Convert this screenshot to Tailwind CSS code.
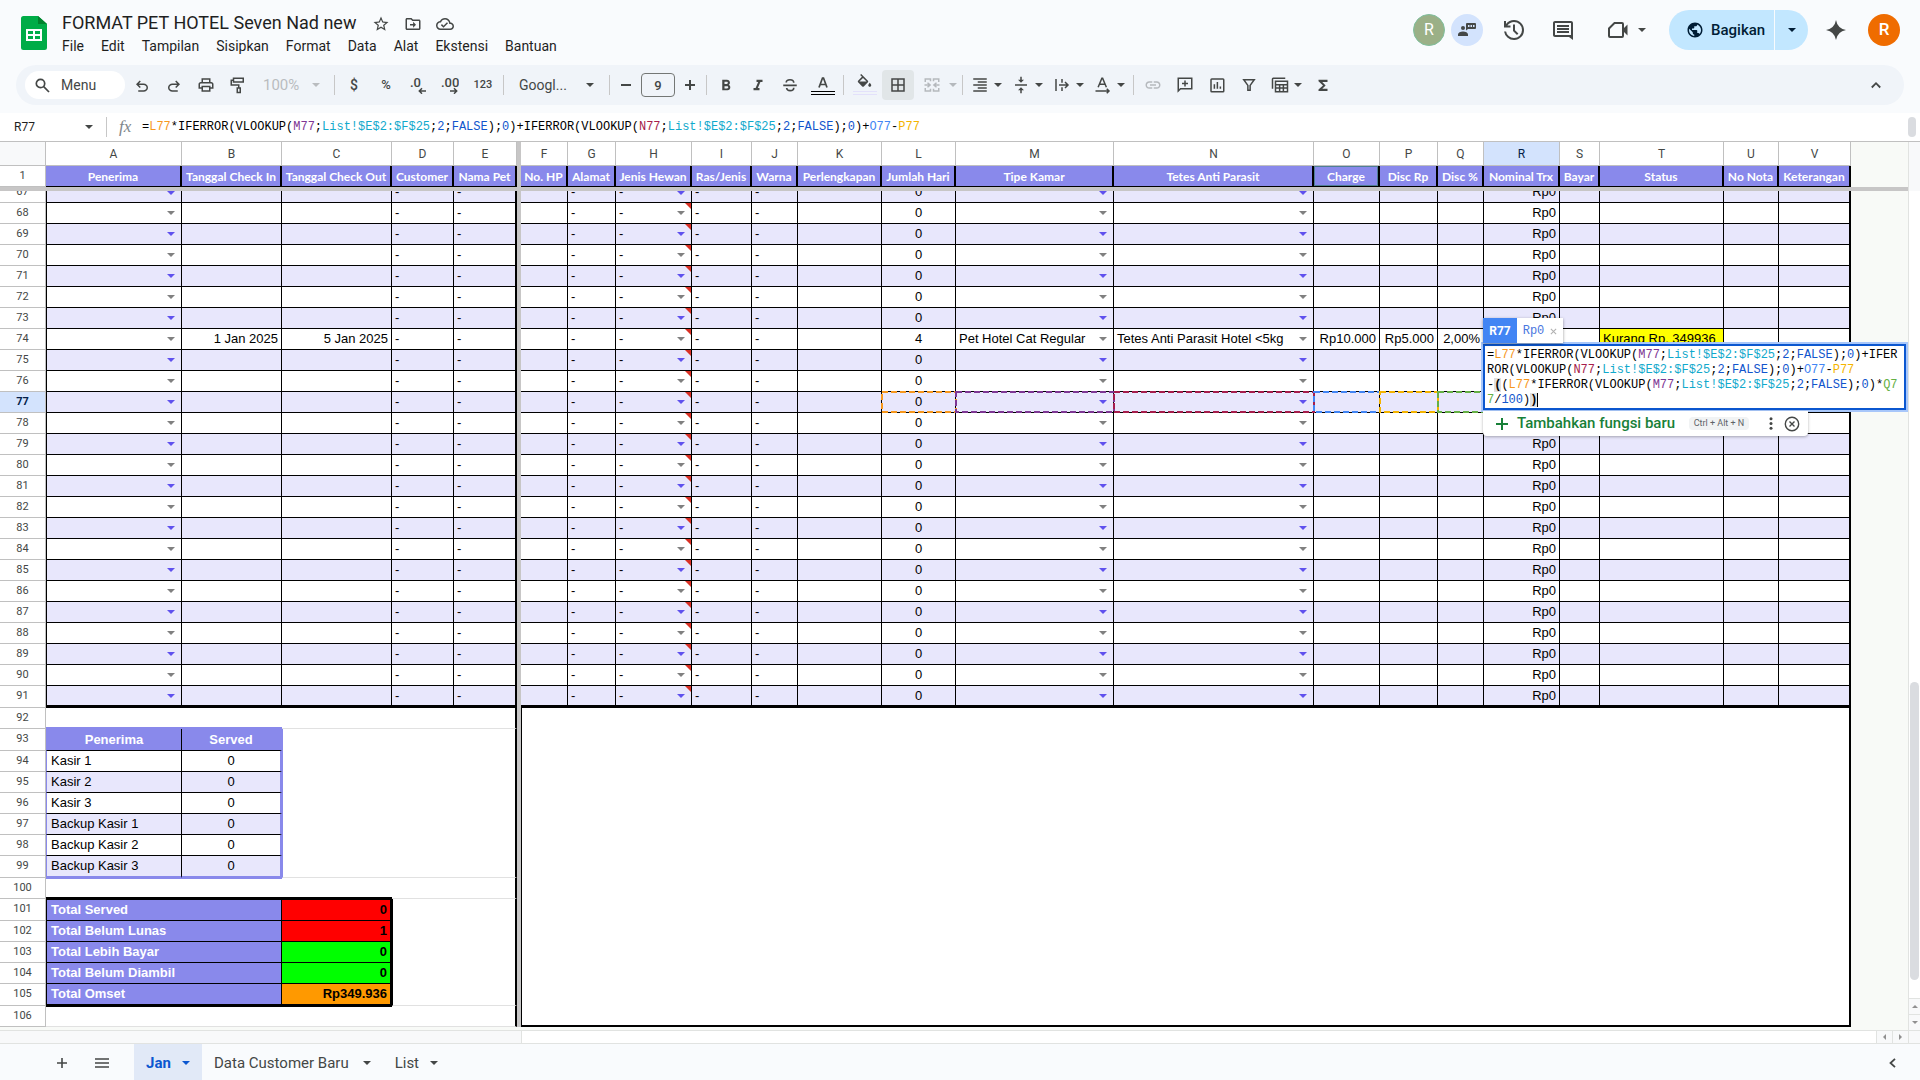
<!DOCTYPE html>
<html lang="id">
<head>
<meta charset="utf-8">
<title>FORMAT PET HOTEL Seven Nad new</title>
<script src="https://cdn.jsdelivr.net/npm/@tailwindcss/browser@4"></script>
</head>
<body class="flex h-screen flex-col overflow-hidden bg-[#f9fbfd] font-['Roboto',sans-serif] text-[#1f1f1f]">

<header class="flex h-[65px] shrink-0 items-start pr-5 pl-5">
  <svg class="mt-4 h-[34px] w-7 shrink-0" viewBox="0 0 28 34"><path fill="#00ac47" d="M3 0h15l9 8v23.500a2.500 2.500 0 0 1-2.500 2.500h-21A2.500 2.500 0 0 1 1 31.500V2.500A2.500 2.500 0 0 1 3.500 0z"/><path fill="#00832d" d="M18 0l9 8h-9z"/><path fill="#fff" d="M6 13h16v12H6zm2 2v3h5v-3zm7 0v3h5v-3zm-7 5v3h5v-3zm7 0v3h5v-3z"/></svg>
  <div class="ml-[14px] min-w-0 pt-[10px]">
    <div class="flex h-[26px] items-center">
      <input aria-label="Nama file" value="FORMAT PET HOTEL Seven Nad new" class="w-[310px] bg-transparent text-[18px] leading-6 outline-none">
      <div class="flex items-center gap-[14px] pt-px text-[#444746]">
        <button aria-label="Bintangi"><svg class="size-[18px]" viewBox="0 0 24 24" fill="currentColor"><path d="M22 9.240l-7.190-.62L12 2 9.190 8.630 2 9.240l5.460 4.730L5.820 21 12 17.270 18.180 21l-1.630-7.030L22 9.240zM12 15.400l-3.760 2.270 1-4.280-3.320-2.880 4.380-.38L12 6.100l1.710 4.040 4.380.38-3.320 2.880 1 4.280L12 15.400z"/></svg></button>
        <button aria-label="Pindahkan"><svg class="size-[18px]" viewBox="0 0 24 24" fill="currentColor"><path d="M20 6h-8l-2-2H4c-1.100 0-2 .9-2 2v12c0 1.100.9 2 2 2h16c1.100 0 2-.9 2-2V8c0-1.100-.9-2-2-2zm0 12H4V6h5.170l2 2H20v10zm-7.840-1L16 13l-3.840-4v3H8v2h4.160z"/></svg></button>
        <button aria-label="Status dokumen"><svg class="size-[18px]" viewBox="0 0 24 24" fill="currentColor"><path d="M19.350 10.040C18.670 6.590 15.640 4 12 4 9.110 4 6.600 5.640 5.350 8.040 2.340 8.360 0 10.910 0 14c0 3.310 2.690 6 6 6h13c2.760 0 5-2.240 5-5 0-2.640-2.050-4.780-4.650-4.960zM19 18H6c-2.210 0-4-1.790-4-4 0-2.050 1.530-3.760 3.560-3.970l1.070-.11.5-.95C8.080 7.140 9.940 6 12 6c2.620 0 4.880 1.860 5.390 4.430l.3 1.500 1.530.11c1.560.1 2.780 1.410 2.780 2.960 0 1.650-1.350 3-3 3zm-9-3.820l-2.090-2.090L6.500 13.500 10 17l6.010-6.010-1.410-1.410z"/></svg></button>
      </div>
    </div>
    <nav class="flex h-5 items-center gap-[17px] text-[14px]">
      <button>File</button><button>Edit</button><button>Tampilan</button><button>Sisipkan</button><button>Format</button><button>Data</button><button>Alat</button><button>Ekstensi</button><button>Bantuan</button>
    </nav>
  </div>
  <div class="ml-auto flex h-[60px] shrink-0 items-center text-[#444746]">
    <span class="flex size-8 items-center justify-center rounded-full border border-[#7fbf9d] bg-[#9bb087] text-[16px] text-white">R</span>
    <button aria-label="Chat" class="ml-[6px] flex size-8 items-center justify-center rounded-full bg-[#d3e3fd]"><svg class="size-5" viewBox="0 0 20 20"><circle cx="6" cy="8" r="2" fill="currentColor"/><path fill="currentColor" d="M1 16v-1.500c0-2 2.500-3 5-3s5 1 5 3V16zM10 3h8a1 1 0 0 1 1 1v4a1 1 0 0 1-1 1h-7l-2 1.500V4a1 1 0 0 1 1-1z"/><path fill="#d3e3fd" d="M11 5h1.500v2H11zm2.500 0H15v2h-1.500zM16 5h1.500v2H16z"/></svg></button>
    <button aria-label="Histori versi" class="ml-[19px]"><svg class="size-6" viewBox="0 0 24 24" fill="currentColor"><path d="M12 22q-3.800 0-6.600-2.500T2.050 13.500H4.100q.4 2.800 2.600 4.600T12 20q3.300 0 5.650-2.350T20 12t-2.350-5.650T12 4Q10 4 8.300 4.900T5.400 7.500H8.500v2H2v-6.500h2v3q1.400-1.900 3.500-2.950T12 2q2.100 0 3.900.8t3.200 2.150 2.150 3.200T22 12t-.75 3.900-2.150 3.200-3.200 2.150T12 22m3-5l-4-4V6.500h2v5.650l3.400 3.400z"/></svg></button>
    <button aria-label="Komentar" class="ml-[25px]"><svg class="size-6" viewBox="0 0 24 24" fill="currentColor"><path d="M21.990 5c0-1.100-.89-2-1.990-2H4c-1.100 0-2 .9-2 2v12c0 1.100.9 2 2 2h14l4 3-.01-17zM20 5v12H4V5h16zM6 13h12v2H6zm0-3h12v2H6zm0-3h12v2H6z"/></svg></button>
    <button aria-label="Rapat" class="ml-[31px] flex items-center"><svg class="size-6" viewBox="0 0 24 24" fill="none" stroke="currentColor" stroke-width="2"><path d="M8.500 5H16a1 1 0 0 1 1 1v12a1 1 0 0 1-1 1H4a1 1 0 0 1-1-1v-7.500z"/><path fill="currentColor" stroke="none" d="M17 11l4.500-4.500v11L17 13z"/></svg><svg class="ml-2 h-1 w-2" viewBox="0 0 8 4"><path fill="currentColor" d="M0 0h8L4 4z"/></svg></button>
    <div class="ml-[23px] flex h-10 gap-px text-[#001d35]">
      <button class="flex w-[105px] items-center gap-[7px] rounded-l-full bg-[#c2e7ff] pl-[17px] text-[15px] font-medium"><svg class="size-[18px]" viewBox="0 0 24 24" fill="currentColor"><path d="M12 2C6.480 2 2 6.480 2 12s4.480 10 10 10 10-4.480 10-10S17.520 2 12 2zm-1 17.930c-3.950-.49-7-3.850-7-7.930 0-.62.08-1.210.21-1.790L9 15v1c0 1.100.9 2 2 2v1.930zm6.900-2.540c-.26-.81-1-1.390-1.900-1.390h-1v-3c0-.55-.45-1-1-1H8v-2h2c.55 0 1-.45 1-1V7h2c1.100 0 2-.9 2-2v-.41c2.930 1.190 5 4.060 5 7.410 0 2.080-.8 3.970-2.100 5.390z"/></svg>Bagikan</button>
      <button aria-label="Opsi berbagi" class="flex w-[33px] items-center justify-center rounded-r-full bg-[#c2e7ff]"><svg class="h-1 w-2" viewBox="0 0 8 4"><path fill="currentColor" d="M0 0h8L4 4z"/></svg></button>
    </div>
    <button aria-label="Gemini" class="ml-[18px]"><svg class="size-5" viewBox="0 0 20 20"><path fill="currentColor" d="M10 0q1.500 8.500 10 10-8.500 1.500-10 10Q8.500 11.500 0 10 8.500 8.500 10 0z"/></svg></button>
    <button aria-label="Akun Google" class="ml-[22px] flex size-8 items-center justify-center rounded-full bg-[#ef6c00] text-[17px] font-medium text-white">R</button>
  </div>
</header>

<div role="toolbar" aria-label="Utama" class="mx-4 mb-2 flex h-10 shrink-0 items-center rounded-full bg-[#f0f4f9] text-[13px] font-medium text-[#444746]">
  <label class="ml-[9px] flex h-7 w-[100px] shrink-0 items-center gap-[11px] rounded-full bg-white pl-[10px]"><svg class="size-[15px] shrink-0" viewBox="0 0 15 15" fill="none" stroke="currentColor" stroke-width="1.700"><circle cx="5.500" cy="5.500" r="4.200"/><path d="M8.700 8.700l5.300 5.300"/></svg><input aria-label="Menu" placeholder="Menu" class="w-12 bg-transparent text-[14px] font-normal outline-none placeholder:text-[#444746]"></label>
  <button aria-label="Urungkan" class="ml-px flex w-8 justify-center"><svg class="size-[18px]" viewBox="0 0 24 24" fill="currentColor"><path d="M7 21v-2h7.100q1.575 0 2.738-1T18 15.500t-1.162-2.500T14.100 12H7.800l2.600 2.600L9 16 4 11l5-5 1.400 1.400L7.800 10h6.300q2.425 0 4.163 1.575T20 15.500t-1.737 3.925T14.100 21z"/></svg></button>
  <button aria-label="Ulangi" class="flex w-8 justify-center"><svg class="size-[18px]" viewBox="0 0 24 24" fill="currentColor"><path transform="matrix(-1 0 0 1 24 0)" d="M7 21v-2h7.100q1.575 0 2.738-1T18 15.500t-1.162-2.500T14.100 12H7.800l2.600 2.600L9 16 4 11l5-5 1.400 1.400L7.800 10h6.300q2.425 0 4.163 1.575T20 15.500t-1.737 3.925T14.100 21z"/></svg></button>
  <button aria-label="Cetak" class="flex w-8 justify-center"><svg class="size-[18px]" viewBox="0 0 24 24" fill="currentColor"><path d="M19 8h-1V3H6v5H5c-1.660 0-3 1.340-3 3v6h4v4h12v-4h4v-6c0-1.660-1.340-3-3-3zM8 5h8v3H8V5zm8 12v2H8v-4h8v2zm2-2v-2H6v2H4v-4c0-.55.45-1 1-1h14c.55 0 1 .45 1 1v4h-2z"/></svg></button>
  <button aria-label="Format cat" class="flex w-8 justify-center"><svg class="size-[18px]" viewBox="0 0 24 24" fill="none" stroke="currentColor" stroke-width="2"><path d="M6 3h13v5H6zM6 5.500H3V12h10v4M11 16h4v6h-4z"/></svg></button>
  <button class="flex w-[77px] items-center gap-[13px] pl-[9px] text-[15px] font-normal text-[#b9bcbf]">100%<svg class="h-1 w-2" viewBox="0 0 8 4"><path fill="currentColor" d="M0 0h8L4 4z"/></svg></button>
  <span class="mx-[3px] h-5 w-px bg-[#c7c7c7]"></span>
  <button class="w-8 text-[14px]">$</button>
  <button class="w-8">%</button>
  <button aria-label="Kurangi desimal" class="flex w-8 justify-center"><svg class="h-[18px] w-4" viewBox="0 0 16 18"><text x="0" y="11" font-size="13" fill="currentColor">.0</text><path fill="none" stroke="currentColor" stroke-width="1.500" d="M16 15H9.500M12 12.300L9.300 15l2.700 2.700"/></svg></button>
  <button aria-label="Tambah desimal" class="flex w-8 justify-center"><svg class="h-[18px] w-[18px]" viewBox="0 0 18 18"><text x="0" y="11" font-size="13" fill="currentColor">.00</text><path fill="none" stroke="currentColor" stroke-width="1.500" d="M9 15h6.500M13 12.300l2.700 2.700-2.700 2.700"/></svg></button>
  <button class="w-[34px] text-[11px]">123</button>
  <span class="mx-[3px] h-5 w-px bg-[#c7c7c7]"></span>
  <button class="flex w-[99px] items-center justify-between pr-3 pl-3 text-[14px] font-normal">Googl...<svg class="h-1 w-2" viewBox="0 0 8 4"><path fill="currentColor" d="M0 0h8L4 4z"/></svg></button>
  <span class="mx-[3px] h-5 w-px bg-[#c7c7c7]"></span>
  <button aria-label="Perkecil font" class="flex w-[26px] justify-center"><svg class="size-3" viewBox="0 0 12 12"><path stroke="currentColor" stroke-width="2" d="M1 6h10"/></svg></button>
  <input aria-label="Ukuran font" value="9" class="mx-[2px] h-6 w-[34px] rounded border border-[#747775] bg-transparent text-center text-[13px] outline-none">
  <button aria-label="Perbesar font" class="flex w-[26px] justify-center"><svg class="size-3" viewBox="0 0 12 12"><path stroke="currentColor" stroke-width="2" d="M1 6h10M6 1v10"/></svg></button>
  <span class="mx-[3px] h-5 w-px bg-[#c7c7c7]"></span>
  <button aria-label="Tebal" class="flex w-8 justify-center"><svg class="size-[18px]" viewBox="0 0 24 24" fill="currentColor"><path d="M15.600 11.790c.97-.67 1.650-1.770 1.650-2.790 0-2.260-1.750-4-4-4H7v14h7.040c2.090 0 3.710-1.700 3.710-3.790 0-1.520-.86-2.820-2.150-3.420zM10 7.500h3c.83 0 1.500.67 1.500 1.500s-.67 1.500-1.500 1.500h-3v-3zm3.500 9H10v-3h3.500c.83 0 1.500.67 1.500 1.500s-.67 1.500-1.500 1.500z"/></svg></button>
  <button aria-label="Miring" class="flex w-8 justify-center"><svg class="size-[18px]" viewBox="0 0 24 24" fill="currentColor"><path d="M10 5v3h2.210l-3.420 8H6v3h8v-3h-2.210l3.420-8H18V5z"/></svg></button>
  <button aria-label="Coret" class="flex w-8 justify-center"><svg class="size-[18px]" viewBox="0 0 24 24" fill="none" stroke="currentColor" stroke-width="2.200"><path d="M3 12.500h18M17 9c0-2.500-2-4-5-4s-5 1.500-5 3.700M7.500 16c.3 2.300 2 3.500 4.700 3.500 3 0 4.800-1.300 4.800-4"/></svg></button>
  <button aria-label="Warna teks" class="flex w-[34px] justify-center"><svg class="h-6 w-6" viewBox="0 0 24 24"><path fill="none" stroke="currentColor" stroke-width="1.700" d="M8 14.500l3.500-9.500h1L16 14.500M9.300 11.500h5.400"/><path fill="#000" d="M0 18h24v1H0zM0 21h24v1H0z"/></svg></button>
  <span class="mx-[3px] h-5 w-px bg-[#c7c7c7]"></span>
  <button aria-label="Warna isian" class="flex w-[35px] justify-center"><svg class="h-[26px] w-6" viewBox="0 0 24 26"><path fill="currentColor" transform="translate(2.500 2) scale(.75)" d="M16.560 8.940L7.620 0 6.210 1.410l2.380 2.380-5.150 5.150c-.59.59-.59 1.540 0 2.120l5.500 5.500c.29.29.68.44 1.060.44s.77-.15 1.060-.44l5.500-5.500c.59-.58.59-1.530 0-2.120zM5.210 10L10 5.210 14.790 10H5.210zM19 11.500s-2 2.170-2 3.500c0 1.100.9 2 2 2s2-.9 2-2c0-1.330-2-3.500-2-3.500z"/><path fill="#e3e1fb" d="M0 19h24v1H0zM0 22h24v1H0z"/></svg></button>
  <button aria-label="Batas" class="flex h-[30px] w-8 items-center justify-center rounded bg-[#e1e6e8]"><svg class="size-[18px]" viewBox="0 0 24 24" fill="currentColor"><path d="M3 3v18h18V3H3zm8 16H5v-6h6v6zm0-8H5V5h6v6zm8 8h-6v-6h6v6zm0-8h-6V5h6v6z"/></svg></button>
  <button aria-label="Gabungkan sel" class="flex w-[45px] items-center justify-end gap-[8px] pr-[2px] text-[#b5b9bd]"><svg class="size-[18px]" viewBox="0 0 24 24" fill="none" stroke="currentColor" stroke-width="2"><path d="M3 8V4h7v3M3 16v4h7v-3M21 8V4h-7v3M21 16v4h-7v-3M2 12h7M6 9l3.500 3L6 15M22 12h-7M18 9l-3.500 3 3.500 3"/></svg><svg class="h-1 w-2" viewBox="0 0 8 4"><path fill="currentColor" d="M0 0h8L4 4z"/></svg></button>
  <span class="mx-[3px] h-5 w-px bg-[#c7c7c7]"></span>
  <button aria-label="Perataan horizontal" class="flex w-[41px] items-center justify-center gap-[5px]"><svg class="size-[18px]" viewBox="0 0 24 24" fill="none" stroke="currentColor" stroke-width="2"><path d="M3 4h18M9 8h12M3 12h18M9 16h12M3 20h18"/></svg><svg class="h-1 w-2" viewBox="0 0 8 4"><path fill="currentColor" d="M0 0h8L4 4z"/></svg></button>
  <button aria-label="Perataan vertikal" class="flex w-[41px] items-center justify-center gap-[5px]"><svg class="size-[18px]" viewBox="0 0 24 24"><path fill="currentColor" d="M4 11h16v2H4zM11 1h2v4h3l-4 4-4-4h3zM11 23h2v-4h3l-4-4-4 4h3z"/></svg><svg class="h-1 w-2" viewBox="0 0 8 4"><path fill="currentColor" d="M0 0h8L4 4z"/></svg></button>
  <button aria-label="Pengepasan teks" class="flex w-[41px] items-center justify-center gap-[5px]"><svg class="size-[18px]" viewBox="0 0 24 24" fill="none" stroke="currentColor" stroke-width="2"><path d="M4 4v16M12 4v5M12 15v5M8 12h12M16 8l4 4-4 4"/></svg><svg class="h-1 w-2" viewBox="0 0 8 4"><path fill="currentColor" d="M0 0h8L4 4z"/></svg></button>
  <button aria-label="Rotasi teks" class="flex w-[41px] items-center justify-center gap-[5px]"><svg class="size-[18px]" viewBox="0 0 24 24" fill="none" stroke="currentColor" stroke-width="2"><path d="M5.500 15L10.500 3h1l5 12M7.500 11h7M2 20h18M17 17l3 3-3 3"/></svg><svg class="h-1 w-2" viewBox="0 0 8 4"><path fill="currentColor" d="M0 0h8L4 4z"/></svg></button>
  <span class="mx-[3px] h-5 w-px bg-[#c7c7c7]"></span>
  <button aria-label="Sisipkan link" class="flex w-8 justify-center text-[#b5b9bd]"><svg class="size-[18px]" viewBox="0 0 24 24" fill="currentColor"><path d="M3.900 12c0-1.710 1.390-3.100 3.100-3.100h4V7H7c-2.760 0-5 2.240-5 5s2.240 5 5 5h4v-1.900H7c-1.710 0-3.100-1.390-3.100-3.100zM8 13h8v-2H8v2zm9-6h-4v1.900h4c1.710 0 3.100 1.390 3.100 3.100s-1.390 3.100-3.100 3.100h-4V17h4c2.760 0 5-2.240 5-5s-2.240-5-5-5z"/></svg></button>
  <button aria-label="Sisipkan komentar" class="flex w-8 justify-center"><svg class="size-[18px]" viewBox="0 0 24 24" fill="none" stroke="currentColor" stroke-width="2"><path d="M3 20V3h18v14H6zM12 6v8M8 10h8"/></svg></button>
  <button aria-label="Sisipkan diagram" class="flex w-8 justify-center"><svg class="size-[18px]" viewBox="0 0 24 24" fill="none" stroke="currentColor" stroke-width="2"><rect x="4" y="4" width="17" height="17" rx="1"/><path d="M8.500 11v6M12.500 8v9M16.500 14v3"/></svg></button>
  <button aria-label="Buat filter" class="flex w-8 justify-center"><svg class="size-[18px]" viewBox="0 0 24 24" fill="none" stroke="currentColor" stroke-width="2"><path d="M5 5h14l-5.500 7.500V19h-3v-6.500z"/></svg></button>
  <button aria-label="Tabel" class="flex w-[42px] items-center justify-center gap-[5px]"><svg class="size-[18px]" viewBox="0 0 24 24" fill="none" stroke="currentColor" stroke-width="2"><path d="M2 17V4a1 1 0 0 1 1-1h16M6 7h16v14H6zM6 11.500h16M6 16h16M11.500 11v10M16.500 11v10"/></svg><svg class="h-1 w-2" viewBox="0 0 8 4"><path fill="currentColor" d="M0 0h8L4 4z"/></svg></button>
  <button aria-label="Fungsi" class="flex w-8 justify-center"><svg class="size-[18px]" viewBox="0 0 24 24" fill="currentColor"><path d="M18 5H6v2l6 5.500L6 18v2h12v-3h-7l4.500-4.500L11 8h7z"/></svg></button>
  <button aria-label="Sembunyikan menu" class="mr-[23px] ml-auto"><svg class="h-[10px] w-[10px]" viewBox="0 0 10 10" fill="none" stroke="currentColor" stroke-width="1.800"><path d="M.8 7.500L5 3.200l4.200 4.300"/></svg></button>
</div>

<div class="flex h-[29px] shrink-0 items-center border-b border-[#c0c0c0] bg-white">
  <input aria-label="Kotak nama" value="R77" class="ml-[14px] w-[71px] text-[12px] outline-none">
  <svg class="h-1 w-2" viewBox="0 0 8 4"><path fill="#444746" d="M0 0h8L4 4z"/></svg>
  <span class="ml-[13px] h-5 w-px bg-[#c7c7c7]"></span>
  <span class="ml-3 w-[18px] font-['Liberation_Serif',serif] text-[17px] text-[#80868b] italic">fx</span>
  <div id="formula-bar" role="textbox" aria-label="Kolom formula" class="ml-[5px] flex-1 font-['Liberation_Mono',monospace] text-[12px] whitespace-pre text-black"></div>
  <span class="mr-1 h-5 w-2 rounded-full bg-[#dadce0]"></span>
</div>

<main class="flex min-h-0 flex-1">
  <div class="relative min-w-0 flex-1 overflow-hidden bg-[#f8faf7]">
    <table id="sheet" class="w-full table-fixed border-separate border-spacing-0 font-['Liberation_Sans',sans-serif] text-[13px] text-black"></table>
  </div>
  <div class="flex w-3 shrink-0 flex-col border-l border-[#e1e3e1] bg-white">
    <span class="h-[49px] shrink-0 bg-[#f8f9fa]"></span>
    <span class="flex-[491]"></span>
    <span class="mr-px ml-px flex-[298] rounded-full bg-[#dadce0]"></span>
    <span class="flex-[18]"></span>
    <button aria-label="Gulir ke atas" class="flex h-4 shrink-0 items-center justify-center border-t border-[#e1e3e1] bg-[#f8f9fa]"><svg class="h-[3px] w-[6px]" viewBox="0 0 6 3"><path fill="#909090" d="M0 3h6L3 0z"/></svg></button>
    <button aria-label="Gulir ke bawah" class="flex h-4 shrink-0 items-center justify-center border-t border-[#e1e3e1] bg-[#f8f9fa]"><svg class="h-[3px] w-[6px]" viewBox="0 0 6 3"><path fill="#909090" d="M0 0h6L3 3z"/></svg></button>
  </div>
</main>

<div class="flex h-[14px] shrink-0 border-y border-[#e1e3e1] bg-white">
  <span class="w-[522px] border-r border-[#e1e3e1] bg-[#f8f9fa]"></span>
  <span class="flex-1"></span>
  <button aria-label="Gulir ke kiri" class="flex w-4 items-center justify-center border-l border-[#e1e3e1] bg-[#f8f9fa]"><svg class="h-[6px] w-[3px]" viewBox="0 0 3 6"><path fill="#909090" d="M3 0v6L0 3z"/></svg></button>
  <button aria-label="Gulir ke kanan" class="flex w-4 items-center justify-center border-l border-[#e1e3e1] bg-[#f8f9fa]"><svg class="h-[6px] w-[3px]" viewBox="0 0 3 6"><path fill="#909090" d="M0 0v6l3-3z"/></svg></button>
  <span class="w-3 border-l border-[#e1e3e1] bg-[#f8f9fa]"></span>
</div>

<footer class="flex h-9 shrink-0 items-center text-[15px] text-[#444746]">
  <button aria-label="Tambah sheet" class="ml-[57px] pt-[2px]"><svg class="size-[10px]" viewBox="0 0 10 10"><path stroke="currentColor" stroke-width="1.600" d="M0 5h10M5 0v10"/></svg></button>
  <button aria-label="Semua sheet" class="ml-7 pt-[2px]"><svg class="h-[10px] w-[14px]" viewBox="0 0 14 10"><path stroke="currentColor" stroke-width="1.600" d="M0 1h14M0 5h14M0 9h14"/></svg></button>
  <button class="ml-[25px] flex h-full w-[68px] items-center gap-[11px] bg-[#e1e9f7] pt-[2px] pl-3 font-bold text-[#0b57d0]">Jan<svg class="h-1 w-2" viewBox="0 0 8 4"><path fill="currentColor" d="M0 0h8L4 4z"/></svg></button>
  <button class="flex h-full items-center gap-[14px] px-3 pt-[2px]">Data Customer Baru<svg class="h-1 w-2" viewBox="0 0 8 4"><path fill="currentColor" d="M0 0h8L4 4z"/></svg></button>
  <button class="flex h-full items-center gap-[11px] px-3 pt-[2px]">List<svg class="h-1 w-2" viewBox="0 0 8 4"><path fill="currentColor" d="M0 0h8L4 4z"/></svg></button>
  <button aria-label="Tampilkan panel samping" class="mr-6 ml-auto pt-[2px]"><svg class="h-[10px] w-[7px]" viewBox="0 0 7 10" fill="none" stroke="currentColor" stroke-width="1.800"><path d="M6 .8L1.500 5 6 9.200"/></svg></button>
</footer>

<script>
// Formula text, coloured by reference
const C = { L: 'text-[#f7981d]', M: 'text-[#7e3794]', N: 'text-[#a61d4c]', F: 'text-[#11a9cc]', O: 'text-[#4285f4]', P: 'text-[#f4b400]', Q: 'text-[#65b045]', n: 'text-[#1155cc]' };
const s = (k, t) => `<span class="${C[k]}">${t}</span>`;
const list = s('F', 'List!$E$2:$F$25'), tail = `;${s('n', '2')};${s('n', 'FALSE')});${s('n', '0')})`;
const look = k => `(VLOOKUP(${s(k, k + '77')};${list}${tail}`;
document.getElementById('formula-bar').innerHTML = `=${s('L', 'L77')}*IFERROR${look('M')}+IFERROR${look('N')}+${s('O', 'O77')}-${s('P', 'P77')}`;

const editor = `
<div class="absolute -top-[48px] -left-px z-20 text-left">
  <div role="textbox" aria-label="Editor sel R77" class="w-[423px] border-2 border-[#0b57d0] bg-white px-[2px] pt-[2px] font-['Liberation_Mono',monospace] text-[12px] leading-[15px] whitespace-pre text-black ring-2 ring-[#a8c7fa]"><div>=${s('L', 'L77')}*IFERROR${look('M')}+IFER</div><div>ROR${look('N')}+${s('O', 'O77')}-${s('P', 'P77')}</div><div>-<b class="bg-[#e0e0e0]">(</b>(${s('L', 'L77')}*IFERROR${look('M')}*${s('Q', 'Q7')}</div><div>${s('Q', '7')}/${s('n', '100')})<b class="border-r border-black bg-[#e0e0e0]">)</b></div></div>
  <div class="absolute -top-[26px] left-0 flex h-[25px] items-center bg-white font-['Liberation_Mono',monospace] text-[12px] shadow-[0_1px_3px_rgba(0,0,0,0.4)]">
    <span class="flex h-full w-[34px] items-center justify-center bg-[#4285f4] font-['Roboto',sans-serif] font-bold text-white">R77</span>
    <span class="flex w-[46px] items-center justify-center gap-[6px] text-[#4a77e0]">Rp0<button aria-label="Tutup pratinjau" class="pt-px text-[#b0b0b0]"><svg class="size-[7px]" viewBox="0 0 8 8"><path stroke="currentColor" stroke-width="1.200" d="M1 1l6 6M7 1L1 7"/></svg></button></span>
  </div>
  <div class="absolute top-[67px] left-0 flex h-[25px] w-[325px] items-center rounded-b bg-white pl-[13px] font-['Roboto',sans-serif] whitespace-nowrap shadow-[0_1px_3px_rgba(0,0,0,0.3)]">
    <button class="flex w-[185px] items-center gap-[9px] text-[15px] font-medium text-[#188038]"><svg class="size-3 shrink-0" viewBox="0 0 12 12"><path stroke="currentColor" stroke-width="2" d="M0 6h12M6 0v12"/></svg>Tambahkan fungsi baru</button>
    <kbd class="ml-[8px] flex h-[13px] w-[60px] items-center justify-center rounded-sm bg-[#f1f3f4] font-['Roboto',sans-serif] text-[9px] text-[#5f6368]">Ctrl + Alt + N</kbd>
    <button aria-label="Opsi lainnya" class="ml-[20px]"><svg class="h-[13px] w-1" viewBox="0 0 4 13" fill="#444746"><circle cx="2" cy="1.800" r="1.500"/><circle cx="2" cy="6.500" r="1.500"/><circle cx="2" cy="11.200" r="1.500"/></svg></button>
    <button aria-label="Tutup" class="ml-[11px]"><svg class="size-4" viewBox="0 0 16 16" fill="none" stroke="#444746" stroke-width="1.400"><circle cx="8" cy="8" r="6.700"/><path d="M5.500 5.500l5 5M10.500 5.500l-5 5"/></svg></button>
  </div>
</div>`;

// Columns: letter, width, heading
const cols = [['A',136,'Penerima'],['B',100,'Tanggal Check In'],['C',110,'Tanggal Check Out'],['D',62,'Customer'],['E',63,'Nama Pet'],['|',4,''],['F',47,'No. HP'],['G',48,'Alamat'],['H',76,'Jenis Hewan'],['I',60,'Ras/Jenis'],['J',46,'Warna'],['K',84,'Perlengkapan'],['L',74,'Jumlah Hari'],['M',158,'Tipe Kamar'],['N',200,'Tetes Anti Parasit'],['O',66,'Charge'],['P',58,'Disc Rp'],['Q',46,'Disc %'],['R',76,'Nominal Trx'],['S',40,'Bayar'],['T',124,'Status'],['U',55,'No Nota'],['V',72,'Keterangan']];
const bar = 'p-0 bg-[#c7c6c6]';
const rowHead = (n, h = 'h-5') => `<th scope="row" class="border-r border-b border-[#c0c0c0] p-0 font-['Roboto',sans-serif] text-[11px] ${n === 77 ? 'bg-[#d3e3fd] font-bold text-[#041e49]' : 'bg-white font-normal text-[#444746]'}"><div class="flex ${h} items-center justify-center">${n}</div></th>`;
const arrow = odd => `<svg class="absolute top-2 right-[6px] h-1 w-2" viewBox="0 0 8 4"><path fill="${odd ? '#5f51ee' : '#808080'}" d="M0 0h8L4 4z"/></svg>`;
const note = '<svg class="absolute top-0 right-0 size-[6px]" viewBox="0 0 6 6"><path fill="#d93025" d="M0 0h6v6z"/></svg>';
const special = { B: '1 Jan 2025', C: '5 Jan 2025', L: '4', M: 'Pet Hotel Cat Regular', N: 'Tetes Anti Parasit Hotel &lt;5kg', O: 'Rp10.000', P: 'Rp5.000', Q: '2,00%', T: 'Kurang Rp. 349936' };
const refs = { L: '#f7981d', M: '#7e3794', N: '#a61d4c', O: '#4285f4', P: '#f4b400', Q: '#65b045' };
// The open cell editor covers column R in these rows
const covered = r => r >= 75 && r <= 78;

let html = '<colgroup><col style="width:46px">' + cols.map(c => `<col style="width:${c[1]}px">`).join('') + '<col></colgroup><thead>';
html += '<tr><td class="h-6 border-r border-b border-[#c0c0c0] bg-[#f8f9fa] p-0"></td>' + cols.map(([l]) => l === '|' ? `<td class="${bar}"></td>` : `<th scope="col" class="h-6 border-r border-b border-[#c0c0c0] p-0 font-['Roboto',sans-serif] text-[12px] font-normal ${l === 'R' ? 'bg-[#d3e3fd] text-[#041e49]' : 'bg-white text-[#444746]'}">${l}</th>`).join('') + '<td></td></tr>';
html += '<tr>' + rowHead(1) + cols.map(([l,, t]) => l === '|' ? `<td class="${bar}"></td>` : `<th scope="col" class="relative border-r-2 border-b border-black bg-[#8989eb] p-0 font-['Lato',sans-serif] text-[12px] font-bold whitespace-nowrap text-white"><div class="flex h-5 items-center justify-center pt-[2px]">${t}</div>${l === 'O' ? '<span class="absolute inset-0 border border-[#4f7f95]"></span>' : ''}</th>`).join('') + '<td></td></tr>';
html += `<tr><td colspan="${cols.length + 2}" class="h-1 p-0 bg-[#c7c6c6]"></td></tr></thead><tbody>`;

for (let r = 67; r <= 91; r++) {
  const odd = r % 2 === 1, last = r === 91, h = r === 67 ? 'h-[11px]' : last ? 'h-[19px]' : 'h-5';
  html += '<tr>' + (r === 67 ? `<th scope="row" class="border-r border-b border-[#c0c0c0] bg-white p-0 font-['Roboto',sans-serif] text-[11px] font-normal text-[#444746]"><div class="flex h-[11px] items-end justify-center overflow-hidden leading-5">67</div></th>` : rowHead(r, last ? 'h-[21px]' : 'h-5'));
  for (const [l] of cols) {
    if (l === '|') { html += `<td class="${bar}"></td>`; continue; }
    let t = 'DEGHIJ'.includes(l) ? '-' : l === 'L' ? '0' : l === 'R' && !covered(r) ? 'Rp0' : '';
    if (r === 74 && special[l]) t = special[l];
    const align = l === 'L' ? 'justify-center' : 'BCOPQR'.includes(l) ? 'justify-end' : 'justify-start';
    let extra = 'AHMN'.includes(l) ? (r === 67 ? '<span class="absolute inset-0 overflow-hidden"><svg class="absolute top-0 right-[6px] h-1 w-2" viewBox="0 0 8 4"><path fill="#5f51ee" d="M0 0h8L4 4z"/></svg></span>' : arrow(odd)) : '';
    if (l === 'H' && r > 67) extra += note;
    if (r === 77 && refs[l]) extra += `<svg class="absolute -top-px -left-px z-10 overflow-visible" style="width:${cols.find(c => c[0] === l)[1]}px" height="22"><rect x="1" y="1" width="100%" height="20" fill="none" stroke="${refs[l]}" stroke-width="2" stroke-dasharray="6 3"/></svg>`;
    if (r === 77 && l === 'R') extra += editor;
    html += `<td class="relative p-0 border-black ${l === 'A' ? 'border-l' : ''} ${l === 'E' || l === 'V' ? 'border-r-2' : 'border-r'} ${last ? 'border-b-3' : 'border-b'} ${r === 74 && l === 'T' ? 'bg-[#ffff00]' : odd ? 'bg-[#e8e7fc]' : 'bg-white'}"><div class="flex ${h} ${r === 67 ? 'items-end' : 'items-center'} ${align} overflow-hidden pr-[3px] pl-[3px] leading-5 whitespace-nowrap">${t}</div>${extra}</td>`;
  }
  html += '<td></td></tr>';
}

// Recap tables below the log
const grid = 'border-[#e1e1e1] bg-white p-0';
html += '<tr>' + rowHead(92) + `<td colspan="2" class="border-b-2 border-[#8989eb] bg-white p-0"></td><td colspan="3" class="border-b ${grid} border-r-2 border-r-black"></td><td rowspan="15" class="${bar}"></td><td rowspan="15" colspan="17" class="border-r-2 border-b-2 border-l border-black bg-white p-0"></td><td rowspan="15"></td></tr>`;
const staff = ['Kasir 1', 'Kasir 2', 'Kasir 3', 'Backup Kasir 1', 'Backup Kasir 2', 'Backup Kasir 3'];
html += '<tr>' + rowHead(93, 'h-[21px]') + '<th class="border-r border-b border-l border-black border-l-[#8989eb] bg-[#8989eb] p-0 text-white">Penerima</th><th class="border-r-2 border-b border-black border-r-[#8989eb] bg-[#8989eb] p-0 text-white">Served</th><td colspan="3" rowspan="7" class="border-r-2 border-b border-l border-[#e1e1e1] border-r-black border-l-[#8989eb] bg-white"></td></tr>';
staff.forEach((n, i) => {
  const bg = i % 2 ? 'bg-[#e8e7fc]' : 'bg-white', end = i === 5 ? 'border-b-2 border-b-[#8989eb]' : 'border-b border-b-black';
  html += '<tr>' + rowHead(94 + i, i === 5 ? 'h-[21px]' : 'h-5') + `<td class="border-r border-l border-r-black border-l-[#8989eb] ${end} ${bg} py-0 pr-0 pl-1">${n}</td><td class="border-r-2 border-r-[#8989eb] ${end} ${bg} p-0 text-center">0</td></tr>`;
});
html += '<tr>' + rowHead(100) + `<td colspan="2" class="border-t border-b-2 border-t-[#8989eb] border-b-black bg-white p-0"></td><td class="border-b-2 border-black bg-white p-0"></td><td colspan="2" class="border-b ${grid} border-r-2 border-r-black"></td></tr>`;
[['Total Served', '0', 'bg-[#ff0000]'], ['Total Belum Lunas', '1', 'bg-[#ff0000]'], ['Total Lebih Bayar', '0', 'bg-[#00ff00]'], ['Total Belum Diambil', '0', 'bg-[#00ff00]'], ['Total Omset', 'Rp349.936', 'bg-[#ff9900]']].forEach(([n, v, bg], i) => {
  const end = (i === 4 ? 'border-b-2' : 'border-b') + (i === 0 ? ' border-t' : '');
  html += '<tr>' + rowHead(101 + i, i === 0 || i === 4 ? 'h-[21px]' : 'h-5') + `<th colspan="2" class="border-r border-l border-black ${end} bg-[#8989eb] py-0 pr-0 pl-1 text-left text-white">${n}</th><td class="border-r-2 border-black ${end} ${bg} py-0 pr-[3px] pl-0 text-right font-bold">${v}</td>` + (i === 0 ? '<td colspan="2" rowspan="5" class="border-r-2 border-b border-l border-black border-b-[#e1e1e1] bg-white"></td>' : '') + '</tr>';
});
html += '<tr>' + rowHead(106) + `<td colspan="3" class="border-t border-b border-t-black border-b-[#e1e1e1] bg-white p-0"></td><td colspan="2" class="border-b ${grid} border-r-2 border-r-black"></td></tr></tbody>`;
document.getElementById('sheet').innerHTML = html;
</script>
</body>
</html>
